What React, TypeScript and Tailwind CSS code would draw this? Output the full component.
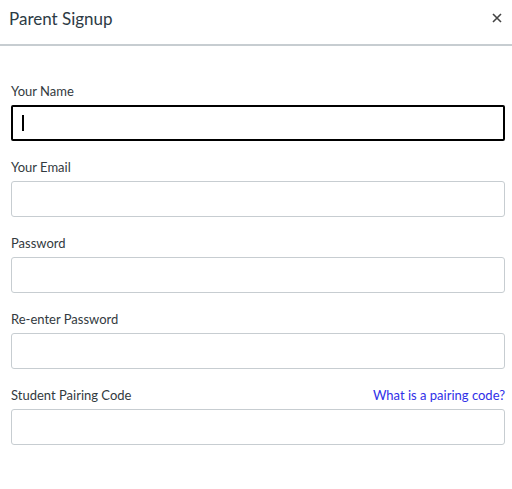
export default function App() {
  const fields = [
    { label: "Your Name", focused: true },
    { label: "Your Email" },
    { label: "Password" },
    { label: "Re-enter Password" },
    { label: "Student Pairing Code", link: "What is a pairing code?" },
  ];

  return (
    <div className="h-[489px] w-[512px] bg-white font-['Lato',sans-serif] text-[#2d3b45]">
      <div className="flex h-[46px] items-center justify-between border-b-2 border-[#c7cdd1] pb-[8px] pl-[9px] pr-[3px]">
        <h2 className="text-[17px] leading-none text-[#2d3b45]">Parent Signup</h2>
        <button className="flex h-6 w-6 items-center justify-center text-[#444]">
          <svg width="10" height="10" viewBox="0 0 10 10" fill="none">
            <path d="M1 1L9 9M9 1L1 9" stroke="currentColor" strokeWidth="1.6" />
          </svg>
        </button>
      </div>

      <form className="flex flex-col gap-4 pl-[11px] pr-[7px] pt-[35px]">
        {fields.map((f) => (
          <div key={f.label} className="flex flex-col gap-1">
            <div className="flex h-5 items-center justify-between">
              <label className="text-[13px] leading-5 text-[#333a40]">{f.label}</label>
              {f.link && (
                <a href="#" className="text-[13px] leading-5 text-[#3030e8]">
                  {f.link}
                </a>
              )}
            </div>
            {f.focused ? (
              <div className="flex h-9 items-center rounded-[2px] border-2 border-black px-[9px]">
                <span className="h-[16px] w-[1.5px] bg-black" />
              </div>
            ) : (
              <input
                className="h-9 rounded-[3px] border border-[#c7cdd1] bg-white px-3 text-sm outline-none"
              />
            )}
          </div>
        ))}
      </form>
    </div>
  );
}
